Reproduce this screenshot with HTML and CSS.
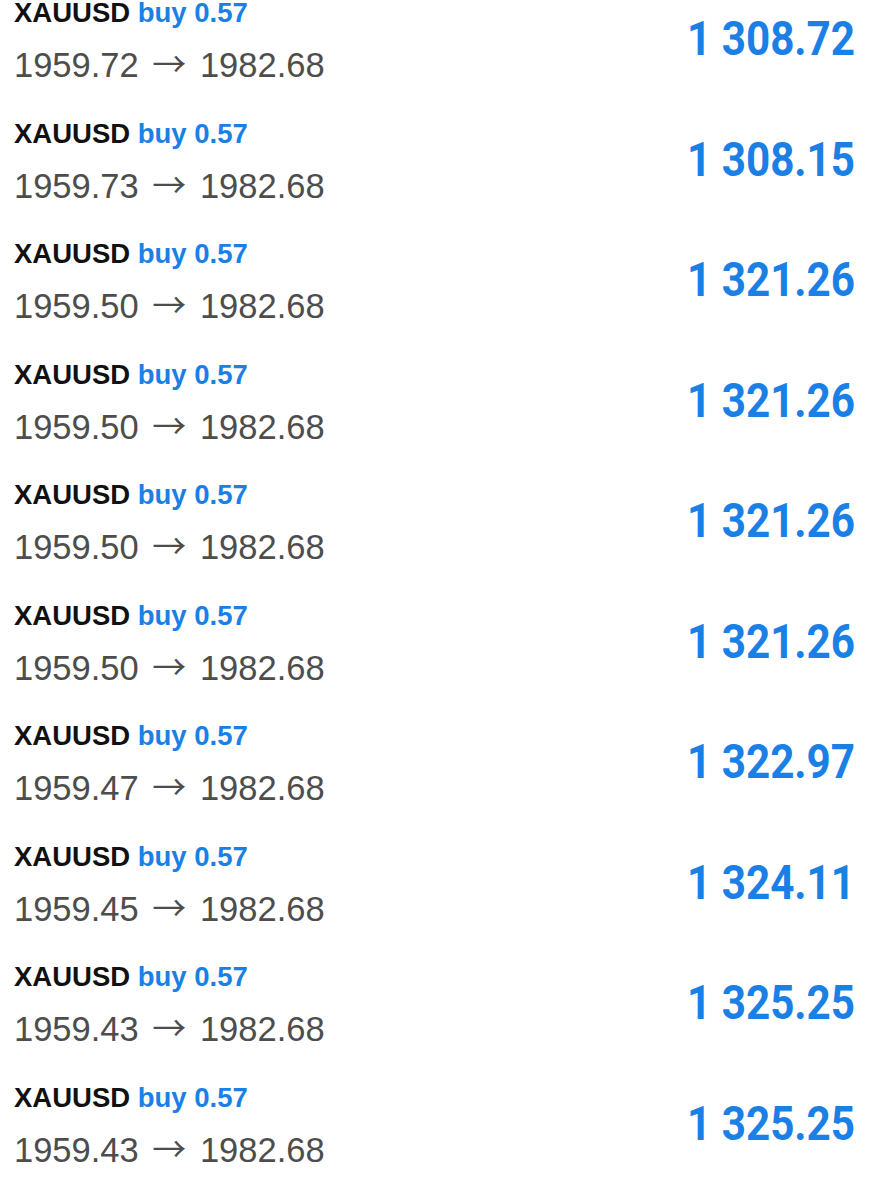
FILE: index.html
```html
<!DOCTYPE html>
<html lang="en">
<head>
    <meta charset="UTF-8">
    <meta name="viewport" content="width=device-width, initial-scale=1.0">
    <title>XAUUSD deals</title>
    <link rel="stylesheet" href="styles.css">
</head>
<body>
    <main class="deals">
        <div class="deal">
            <div class="deal-info">
                <div class="deal-title">XAUUSD <span class="deal-type">buy 0.57</span></div>
                <div class="deal-prices">1959.72 <span class="arrow">→</span> 1982.68</div>
            </div>
            <div class="deal-profit">1 308.72</div>
        </div>
        <div class="deal">
            <div class="deal-info">
                <div class="deal-title">XAUUSD <span class="deal-type">buy 0.57</span></div>
                <div class="deal-prices">1959.73 <span class="arrow">→</span> 1982.68</div>
            </div>
            <div class="deal-profit">1 308.15</div>
        </div>
        <div class="deal">
            <div class="deal-info">
                <div class="deal-title">XAUUSD <span class="deal-type">buy 0.57</span></div>
                <div class="deal-prices">1959.50 <span class="arrow">→</span> 1982.68</div>
            </div>
            <div class="deal-profit">1 321.26</div>
        </div>
        <div class="deal">
            <div class="deal-info">
                <div class="deal-title">XAUUSD <span class="deal-type">buy 0.57</span></div>
                <div class="deal-prices">1959.50 <span class="arrow">→</span> 1982.68</div>
            </div>
            <div class="deal-profit">1 321.26</div>
        </div>
        <div class="deal">
            <div class="deal-info">
                <div class="deal-title">XAUUSD <span class="deal-type">buy 0.57</span></div>
                <div class="deal-prices">1959.50 <span class="arrow">→</span> 1982.68</div>
            </div>
            <div class="deal-profit">1 321.26</div>
        </div>
        <div class="deal">
            <div class="deal-info">
                <div class="deal-title">XAUUSD <span class="deal-type">buy 0.57</span></div>
                <div class="deal-prices">1959.50 <span class="arrow">→</span> 1982.68</div>
            </div>
            <div class="deal-profit">1 321.26</div>
        </div>
        <div class="deal">
            <div class="deal-info">
                <div class="deal-title">XAUUSD <span class="deal-type">buy 0.57</span></div>
                <div class="deal-prices">1959.47 <span class="arrow">→</span> 1982.68</div>
            </div>
            <div class="deal-profit">1 322.97</div>
        </div>
        <div class="deal">
            <div class="deal-info">
                <div class="deal-title">XAUUSD <span class="deal-type">buy 0.57</span></div>
                <div class="deal-prices">1959.45 <span class="arrow">→</span> 1982.68</div>
            </div>
            <div class="deal-profit">1 324.11</div>
        </div>
        <div class="deal">
            <div class="deal-info">
                <div class="deal-title">XAUUSD <span class="deal-type">buy 0.57</span></div>
                <div class="deal-prices">1959.43 <span class="arrow">→</span> 1982.68</div>
            </div>
            <div class="deal-profit">1 325.25</div>
        </div>
        <div class="deal">
            <div class="deal-info">
                <div class="deal-title">XAUUSD <span class="deal-type">buy 0.57</span></div>
                <div class="deal-prices">1959.43 <span class="arrow">→</span> 1982.68</div>
            </div>
            <div class="deal-profit">1 325.25</div>
        </div>
    </main>
</body>
</html>
```

FILE: styles.css
```css
/* Общие стили */
body {
    margin: 0;
    background: #ffffff;
    font-family: "Liberation Sans", Arial, sans-serif;
    overflow: hidden;
}

/* Список сделок */
.deals {
    display: flex;
    flex-direction: column;
    margin-top: -2px;
}

.deal {
    display: flex;
    justify-content: space-between;
    align-items: flex-start;
    height: 120.5px;
    padding: 0 15px 0 14px;
    box-sizing: border-box;
}

.deal-info {
    display: flex;
    flex-direction: column;
    gap: 17px;
}

.deal-title {
    font-size: 27.5px;
    line-height: 30px;
    font-weight: bold;
    color: #111111;
}

.deal-type {
    color: #1b80e6;
}

.deal-prices {
    font-size: 34.5px;
    line-height: 40px;
    color: #4d4d4d;
}

/* Стрелка между ценами */
.arrow {
    margin: 0 4px;
    font-family: "Noto Sans CJK JP", "DejaVu Sans", sans-serif;
    font-size: 34px;
    font-weight: normal;
    line-height: 1;
}

.deal-profit {
    padding-top: 17px;
    font-family: Roboto, "Liberation Sans", sans-serif;
    font-size: 48px;
    line-height: 48px;
    font-weight: bold;
    color: #1b80e6;
    transform: scaleX(0.88);
    transform-origin: right center;
}
```
